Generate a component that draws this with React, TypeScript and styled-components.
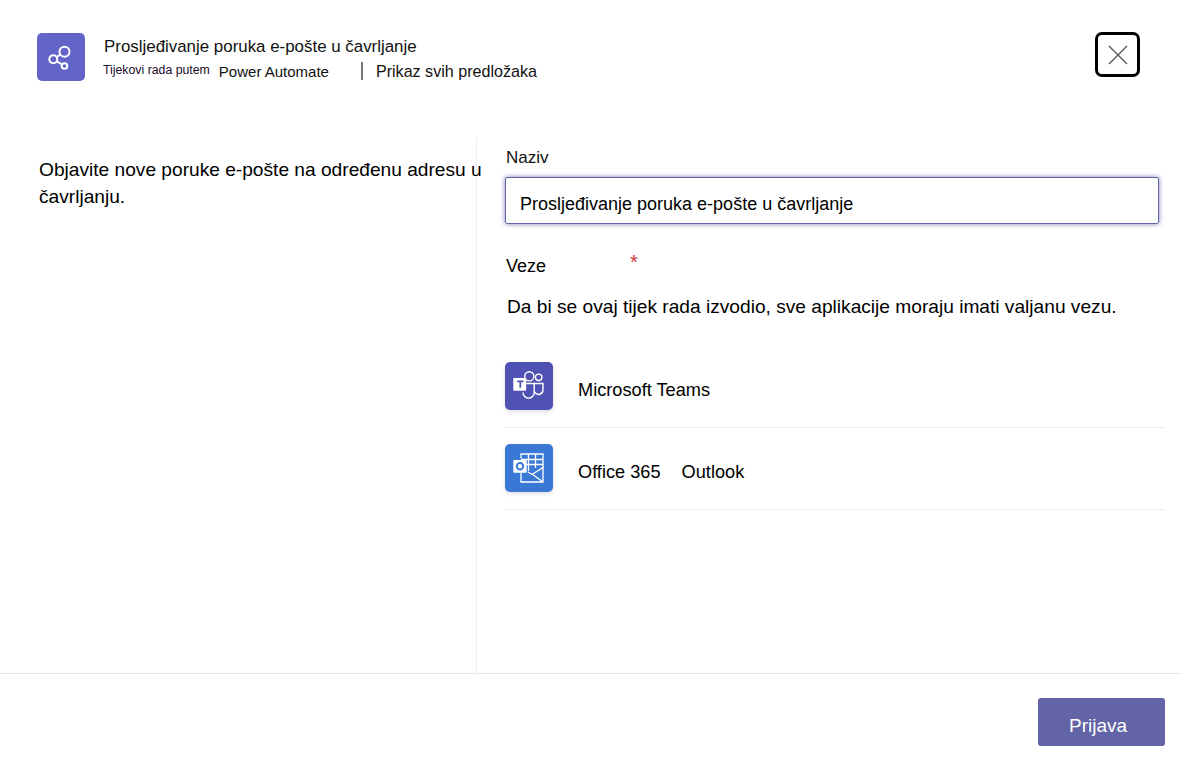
import styled, { createGlobalStyle } from 'styled-components';

const GlobalStyle = createGlobalStyle`
  html, body {
    margin: 0;
    padding: 0;
    background: #ffffff;
  }
  body {
    font-family: 'Liberation Sans', Arial, sans-serif;
    color: #000000;
  }
`;

const Page = styled.div`
  width: 1182px;
  height: 769px;
  display: flex;
  flex-direction: column;
  overflow: hidden;
`;

const Header = styled.header`
  height: 137px;
  flex: none;
  box-sizing: border-box;
  padding: 33px 42px 0 37px;
  display: flex;
  align-items: flex-start;
`;

const LogoTile = styled.div`
  width: 48px;
  height: 48px;
  border-radius: 5px;
  background: #6264c8;
  flex: none;
`;

const HeaderText = styled.div`
  margin-left: 19px;
  flex: 1;
  padding-top: 4px;
`;

const HeaderTitle = styled.div`
  font-size: 16.9px;
  line-height: 20px;
  color: #111111;
`;

const SubRow = styled.div`
  display: flex;
  align-items: center;
  height: 24px;
  margin-top: 2px;
  margin-left: -1px;
`;

const Via = styled.span`
  font-size: 12.3px;
  color: #1c0a2c;
  margin-right: 9px;
  position: relative;
  top: -1px;
`;

const Brand = styled.span`
  font-size: 15px;
  color: #111111;
`;

const Divider = styled.span`
  width: 2px;
  height: 18px;
  background: #777777;
  margin: 0 13px 0 32px;
`;

const TemplatesLink = styled.span`
  font-size: 16.1px;
  color: #111111;
`;

const CloseButton = styled.button`
  width: 45px;
  height: 45px;
  box-sizing: border-box;
  border: 3px solid #000000;
  border-radius: 7px;
  background: #ffffff;
  padding: 0;
  display: flex;
  align-items: center;
  justify-content: center;
  flex: none;
  margin-top: -1px;
`;

const Body = styled.main`
  flex: 1;
  display: flex;
  min-height: 0;
`;

const LeftPane = styled.section`
  width: 477px;
  flex: none;
  box-sizing: border-box;
  border-right: 1px solid #efefef;
  padding: 19px 0 0 39px;
`;

const Description = styled.p`
  margin: 0;
  width: 445px;
  font-size: 19.15px;
  line-height: 27px;
`;

const RightPane = styled.section`
  flex: 1;
  box-sizing: border-box;
  padding: 11px 17px 0 28px;
`;

const FieldLabel = styled.div`
  font-size: 17px;
  line-height: 20px;
  margin-left: 1px;
  color: #111111;
`;

const NameInput = styled.div`
  width: 654px;
  height: 47px;
  box-sizing: border-box;
  margin-top: 9px;
  border: 1px solid #6264a7;
  border-radius: 2px;
  box-shadow: 0 0 5px rgba(70, 70, 160, 0.7);
  padding: 16px 0 0 14px;
  font-size: 18px;
  line-height: 20px;
`;

const ConnectionsHead = styled.div`
  display: flex;
  margin-top: 32px;
  font-size: 18px;
  height: 20px;
  line-height: 20px;
  margin-left: 1px;
`;

const Required = styled.span`
  color: #d13438;
  font-size: 20px;
  margin-left: 84px;
  position: relative;
  top: -4px;
`;

const Hint = styled.p`
  margin: 20px 0 0 2px;
  font-size: 19.15px;
  line-height: 22px;
`;

const ConnectionList = styled.div`
  margin-top: 28px;
`;

const ConnectionRow = styled.div`
  height: 82px;
  box-sizing: border-box;
  padding-top: 16px;
  border-bottom: 1px solid #ededed;
  display: flex;
  align-items: flex-start;
`;

const AppTile = styled.div<{ $color: string }>`
  width: 48px;
  height: 48px;
  border-radius: 5px;
  background: ${(p) => p.$color};
  box-shadow: 0 2px 4px rgba(0, 0, 0, 0.12);
  flex: none;
`;

const AppName = styled.div`
  margin-left: 25px;
  font-size: 18.2px;
  line-height: 20px;
  padding-top: 18px;
`;

const AppGap = styled.span`
  margin-left: 21px;
`;

const Footer = styled.footer`
  height: 96px;
  flex: none;
  box-sizing: border-box;
  border-top: 1px solid #e8e8e8;
  padding: 24px 17px 0 0;
  display: flex;
  justify-content: flex-end;
  align-items: flex-start;
`;

const SignInButton = styled.button`
  width: 127px;
  height: 48px;
  border: none;
  border-radius: 3px;
  background: #6264a7;
  color: #ffffff;
  font-family: inherit;
  font-size: 19px;
  padding: 8px 7px 0 0;
`;

const ShareIcon = () => (
  <svg width="48" height="48" viewBox="0 0 48 48" fill="none" stroke="#ffffff" strokeWidth="2">
    <circle cx="27.5" cy="18.7" r="5" />
    <circle cx="16.3" cy="26.3" r="4" />
    <circle cx="27.5" cy="33" r="2.8" />
    <path d="M19.6 24 23.4 21.5M19.8 28.3 25 31.5" />
  </svg>
);

const CloseIcon = () => (
  <svg width="20" height="20" viewBox="0 0 20 20" stroke="#555555" strokeWidth="1.3">
    <path d="M1 1 19 19M19 1 1 19" />
  </svg>
);

const TeamsIcon = () => (
  <svg width="48" height="48" viewBox="0 0 48 48" fill="none" stroke="#ffffff" strokeWidth="1.4">
    <circle cx="24.3" cy="14.3" r="4.6" />
    <circle cx="33.7" cy="15.3" r="3.2" />
    <path d="M18 21.5h11.2v9a5.6 5.6 0 0 1-11.2 0" />
    <path d="M29.2 21.5h8.8v6.5a4.4 4.4 0 0 1-8.2 2.2" />
    <rect x="8.3" y="16" width="12.9" height="12.7" rx="0.8" fill="#ffffff" stroke="none" />
    <path d="M12.2 19.4h6.2M15.3 19.4v6.4" stroke="#4f52b2" strokeWidth="1.7" />
  </svg>
);

const OutlookIcon = () => (
  <svg width="48" height="48" viewBox="0 0 48 48" fill="none" stroke="#ffffff" strokeWidth="1.3">
    <path d="M16 14.5V10h22v14" />
    <path d="M23.5 10v17M30.5 10v14M16 15.5h22M21 20.5h17" />
    <path d="M16 29v9h22V23.5L27 30.5l-4-2.5" />
    <path d="M38 38 27 30" />
    <rect x="8.3" y="16" width="13.4" height="12.7" rx="0.8" fill="#ffffff" stroke="none" />
    <circle cx="15" cy="22.3" r="3.2" stroke="#3a78d6" strokeWidth="2" />
  </svg>
);

export default function App() {
  return (
    <Page>
      <GlobalStyle />
      <Header>
        <LogoTile>
          <ShareIcon />
        </LogoTile>
        <HeaderText>
          <HeaderTitle>Prosljeđivanje poruka e-pošte u čavrljanje</HeaderTitle>
          <SubRow>
            <Via>Tijekovi rada putem</Via>
            <Brand>Power Automate</Brand>
            <Divider />
            <TemplatesLink>Prikaz svih predložaka</TemplatesLink>
          </SubRow>
        </HeaderText>
        <CloseButton aria-label="Zatvori">
          <CloseIcon />
        </CloseButton>
      </Header>

      <Body>
        <LeftPane>
          <Description>Objavite nove poruke e-pošte na određenu adresu u čavrljanju.</Description>
        </LeftPane>
        <RightPane>
          <FieldLabel>Naziv</FieldLabel>
          <NameInput>Prosljeđivanje poruka e-pošte u čavrljanje</NameInput>
          <ConnectionsHead>
            Veze<Required>*</Required>
          </ConnectionsHead>
          <Hint>Da bi se ovaj tijek rada izvodio, sve aplikacije moraju imati valjanu vezu.</Hint>
          <ConnectionList>
            <ConnectionRow>
              <AppTile $color="#4f52b2">
                <TeamsIcon />
              </AppTile>
              <AppName>Microsoft Teams</AppName>
            </ConnectionRow>
            <ConnectionRow>
              <AppTile $color="#3a78d6">
                <OutlookIcon />
              </AppTile>
              <AppName>
                Office 365<AppGap>Outlook</AppGap>
              </AppName>
            </ConnectionRow>
          </ConnectionList>
        </RightPane>
      </Body>

      <Footer>
        <SignInButton>Prijava</SignInButton>
      </Footer>
    </Page>
  );
}
